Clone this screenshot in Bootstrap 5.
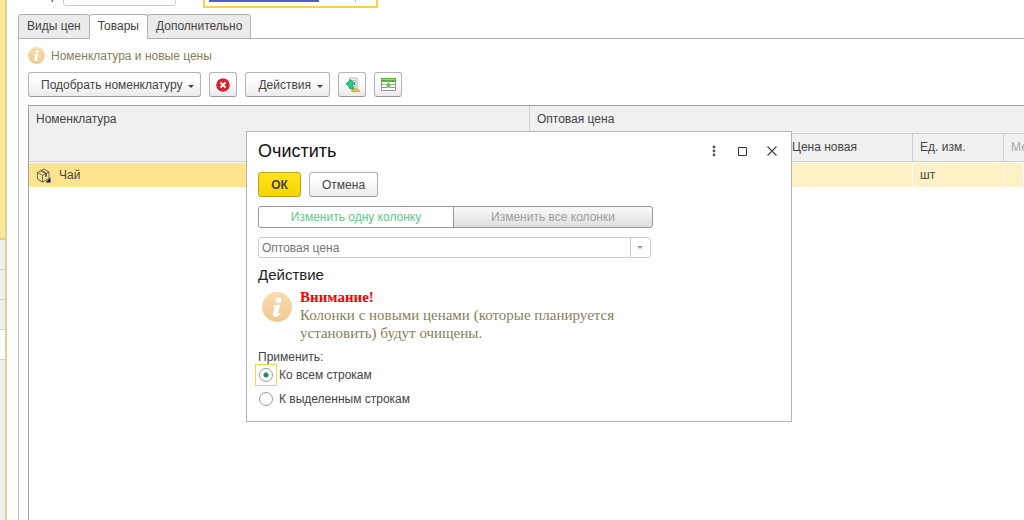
<!DOCTYPE html>
<html lang="ru">
<head>
<meta charset="utf-8">
<meta name="viewport" content="width=device-width, initial-scale=1">
<title>Установка цен номенклатуры</title>
<link href="https://cdn.jsdelivr.net/npm/bootstrap@5.3.0/dist/css/bootstrap.min.css" rel="stylesheet">
<style>
body { font-family: "Liberation Sans", Arial, sans-serif; font-size: 12px; line-height: 16px; color: #444; background: #fff; }
svg { display: block; flex: none; }

/* section strip on the left */
.strip { width: 7px; flex: none; background: #f0f0f0; border-right: 2px solid #d9d29a; }
.strip-head { height: 240px; background: #fbe995; border-bottom: 2px solid #d9d29a; }
.strip-item { height: 30px; border-bottom: 1px solid #d0d0d0; }
.strip-item.current { background: #fff; }

/* form header, scrolled up */
.work { padding-left: 11px; min-width: 0; }
.form-head { height: 8px; overflow: hidden; }
.form-head label { width: 45px; margin-bottom: 5px; font-size: 13px; }
.num-field { width: 113px; height: 24px; margin-bottom: 2px; border: 1px solid #ccc; border-radius: 3px; }
.price-field { width: 175px; height: 28px; margin-left: 27px; border: 2px solid #f9d03f; padding: 0 20px 4px 4px; }
.price-field select { width: 100%; height: 100%; padding: 0; border: 0; border-right: 1px solid #bbb; appearance: none; outline: 0;
  background: linear-gradient(#4a63c4, #4a63c4) 0 0 / 110px 20px no-repeat; color: #fff; }

/* tabs */
.form-tabs { margin-top: 6px; border-bottom: 1px solid #b0b0b0; }
.form-tabs .nav-link { height: 25px; padding: 3px 8px 4px; margin: 0 -1px -1px 0; font-size: 12px; line-height: 16px; color: #444; background: #ebebeb;
  border: 1px solid #b0b0b0; border-radius: 3px 3px 0 0; }
.form-tabs .nav-link.active { color: #444; background: #fff; border-color: #b0b0b0 #b0b0b0 #fff; }
.sheet { border-left: 1px solid #bdbdbd; padding: 8px 0 0 9px; }
.hint { color: #86805a; gap: 6px; }

/* buttons */
.btn-form { height: 25px; padding: 0 12px; font-size: 12px; line-height: 16px; color: #444; border: 1px solid #b4b4b4; border-bottom-color: #999;
  border-radius: 3px; background: linear-gradient(#fff 30%, #ebebeb); }
.btn-form:hover { color: #222; border-color: #999; }
.btn-form.dropdown-toggle::after { margin: 0 0 0 6px; border-width: 3px 3px 0; vertical-align: 1px; }
.btn-drop { padding-right: 6px; }
.btn-pic { width: 28px; padding: 0; display: flex; align-items: center; justify-content: center; }
.btn-ok { width: 43px; padding: 0; font-weight: 700; border-color: #b9a21c; background: linear-gradient(#ffe31c, #f5d500); }

/* goods table */
.goods { margin-top: 8px; border: 1px solid #a0a0a0; border-width: 1px 0 0 1px; overflow: hidden; }
.goods table { width: 100%; table-layout: fixed; border-collapse: separate; border-spacing: 0; white-space: nowrap; }
.goods th { font-weight: 400; background: #f0f0f0; height: 28px; padding: 5px 7px 6px; vertical-align: top; border-bottom: 1px solid #cfcfcf; border-right: 1px solid #cfcfcf; }
.goods th:last-child { border-right: 0; }
.goods td { height: 26px; padding: 0 7px; background: #fff1c5; border: 1px solid #fff; border-width: 1px 1px 1px 0; }
.goods td.picked { background: #ffe48f; }
.goods .dim { color: #a8a8a8; }

/* clear dialog */
.clear-box { position: absolute; left: 246px; top: 131px; width: 546px; background: #fff; border: 1px solid #b4b4b4; padding: 9px 11px 10px; }
.clear-box h1 { font-size: 18px; line-height: 20px; color: #111; margin: 0; }
.clear-box h2 { font-size: 15px; line-height: 18px; color: #222; margin: 8px 0 4px; }
.win-bar { margin-right: -6px; }
.win-btn { width: 29px; height: 20px; padding: 0; border: 0; background: none; display: flex; align-items: center; justify-content: center; }
.main-cmd { margin-top: 11px; }
.mode { width: 395px; margin-top: 9px; }
.mode .btn { height: 22px; padding: 0; font-size: 12px; line-height: 16px; border: 1px solid #999; border-radius: 3px; }
.mode .btn.active { flex: 0 0 196px; color: #5ec98c; background: #fff; border-color: #999; }
.mode .btn:disabled { color: #a0a0a0; background: linear-gradient(#fafafa, #dedede); border-color: #999; opacity: 1; }
.column-pick { width: 393px; height: 21px; margin-top: 9px; padding: 0 24px 0 3px; appearance: none; color: #777; opacity: 1; display: block;
  border: 1px solid #ccc; border-radius: 3px; background:
  linear-gradient(#ccc, #ccc) right 19px top 0 / 1px 100% no-repeat,
  url("data:image/svg+xml,%3Csvg xmlns='http://www.w3.org/2000/svg' width='6' height='3'%3E%3Cpath d='M0 0h6L3 3z' fill='%23999'/%3E%3C/svg%3E") right 7px top 8px no-repeat #fff; }
.warn { font-family: "Liberation Serif", "Times New Roman", serif; font-size: 15px; line-height: 18px; color: #86805a; padding-left: 4px; }
.warn strong { color: #f00; }
.warn svg { margin-top: 4px; }
.apply { margin-top: 9px; }
.apply legend { font-size: 12px; line-height: 12px; margin: 0; float: none; }
.pick { height: 24px; }
.pick span { width: 22px; height: 22px; margin: 0 2px 0 -3px; border: 1px solid transparent; display: flex; align-items: center; justify-content: center; }
.pick.current span { border-color: #f9d548; }
.pick input { appearance: none; width: 14px; height: 14px; margin: 0; border: 1px solid #999; border-radius: 50%; background: #fff; }
.pick input:checked { background: radial-gradient(circle, #14954c 2px, #fff 3px); }
</style>
</head>
<body>
<svg width="0" height="0" class="position-absolute" aria-hidden="true">
  <defs>
    <linearGradient id="amber" x1="0" y1="0" x2="0" y2="1"><stop offset="0" stop-color="#fbdcae"/><stop offset="1" stop-color="#efc993"/></linearGradient>
    <symbol id="info" viewBox="0 0 30 30">
      <circle cx="15" cy="15" r="15" fill="url(#amber)"/>
      <circle cx="16.500" cy="8.300" r="2.900" fill="#fff"/>
      <path d="M11 13.200 18.400 12.400 16 21.200Q15.800 22.600 18.200 21L18.800 22Q15.500 25 12.800 24.600 10.400 24.200 11 21.600L12.500 15.500Q12.600 14.400 10.800 14.300Z" fill="#fff"/>
    </symbol>
  </defs>
</svg>
<div class="d-flex min-vh-100 overflow-hidden position-relative">
  <aside class="strip">
    <div class="strip-head"></div>
    <div class="strip-item"></div>
    <div class="strip-item"></div>
    <div class="strip-item"></div>
    <div class="strip-item current"></div>
  </aside>

  <main class="work d-flex flex-column flex-fill">
    <div class="form-head d-flex align-items-end">
      <label for="num">Номер:</label>
      <input id="num" class="num-field" type="text">
      <div class="price-field"><select aria-label="Вид цены"><option></option></select></div>
    </div>

    <nav class="nav form-tabs">
      <a class="nav-link" href="#types">Виды цен</a>
      <a class="nav-link active" href="#goods">Товары</a>
      <a class="nav-link" href="#extra">Дополнительно</a>
    </nav>

    <section class="sheet d-flex flex-column flex-fill" id="goods">
      <div class="hint d-flex align-items-center">
        <svg width="17" height="17"><use href="#info"/></svg>
        <span>Номенклатура и новые цены</span>
      </div>

      <div class="d-flex gap-2 mt-2">
        <button type="button" class="btn btn-form btn-drop dropdown-toggle">Подобрать номенклатуру</button>
        <button type="button" class="btn btn-form btn-pic" aria-label="Очистить">
          <svg width="14" height="14" viewBox="0 0 14 14"><circle cx="7" cy="7" r="6.800" fill="#d9232e"/><path d="m4.500 4.500 5 5m0-5-5 5" stroke="#fff" stroke-width="1.800"/></svg>
        </button>
        <button type="button" class="btn btn-form btn-drop dropdown-toggle">Действия</button>
        <button type="button" class="btn btn-form btn-pic" aria-label="Загрузить цены">
          <svg width="15" height="16" viewBox="0 0 15 16"><path d="M4.500 1h7.500v11H4.500z" fill="#f3f8fb" stroke="#a5bac6"/><path d="M7 3.500h4m-3 2h3m-2 2h2m-2 2h2" stroke="#a9bfca"/><path d="M5.500 2.500 .800 7.200H3q0 4.500 5.500 5V9.500Q7 9 7.300 7.200h2.900z" fill="#27d17c" stroke="#129a58" stroke-width=".800"/><path d="M6.500 14.500q0-2.500 2.500-2.200 1.500-2.200 3 0 2.500 0 2.500 2.200z" fill="#f1c644" stroke="#c8982a" stroke-width=".700"/></svg>
        </button>
        <button type="button" class="btn btn-form btn-pic" aria-label="Заполнить таблицу">
          <svg width="15" height="14" viewBox="0 0 15 14"><path d="M.500 .500h14v12H.500z" fill="#fff" stroke="#8d9799"/><path d="M0 0h15v4H0z" fill="#5fae3f"/><path d="M1 1.500h13" stroke="#9ad67d"/><path d="M1 6.500h13M1 9.500h13" stroke="#8d9799"/><path d="M6.500 4h2v2h2.900L7.500 10 3.600 6h2.900z" fill="#5cb637" stroke="#fff" stroke-width=".500"/></svg>
        </button>
      </div>

      <div class="goods flex-fill">
        <table>
          <colgroup><col style="width:501px"><col style="width:255px"><col style="width:128px"><col style="width:91px"><col></colgroup>
          <thead>
            <tr><th rowspan="2">Номенклатура</th><th colspan="4">Оптовая цена</th></tr>
            <tr><th>Цена</th><th>Цена новая</th><th>Ед. изм.</th><th class="dim">Метод</th></tr>
          </thead>
          <tbody>
            <tr>
              <td class="picked"><div class="d-flex align-items-center gap-2">
                <svg width="15" height="15" viewBox="0 0 15 15"><path d="M1.500 4.500 8 1l5 3v6.500L6.500 14l-5-3zM1.500 4.500l5 2.800L13 4M6.500 7.300V14M4.500 2.800l5 3v3l1-.500V5.200l-5-3" fill="none" stroke="#5b574b" stroke-width=".900" stroke-linejoin="round"/><path d="M14.500 9.500v5h-5z" fill="#10106e"/></svg>
                <span>Чай</span></div></td>
              <td></td><td></td><td>шт</td><td></td>
            </tr>
          </tbody>
        </table>
      </div>
    </section>
  </main>

  <div class="clear-box" role="dialog" aria-labelledby="clear-title">
    <div class="win-bar d-flex align-items-center">
      <h1 id="clear-title" class="me-auto">Очистить</h1>
      <button type="button" class="win-btn" aria-label="Ещё"><svg width="4" height="12" viewBox="0 0 4 12" fill="#555"><circle cx="2" cy="2" r="1.400"/><circle cx="2" cy="6" r="1.400"/><circle cx="2" cy="10" r="1.400"/></svg></button>
      <button type="button" class="win-btn" aria-label="Развернуть"><svg width="9" height="9" viewBox="0 0 9 9"><path d="M.500 .500h8v8h-8z" fill="none" stroke="#333"/></svg></button>
      <button type="button" class="win-btn" aria-label="Закрыть"><svg width="10" height="10" viewBox="0 0 10 10"><path d="m.500 .500 9 9m0-9-9 9" stroke="#444" stroke-width="1.200"/></svg></button>
    </div>
    <div class="main-cmd d-flex gap-2">
      <button type="button" class="btn btn-form btn-ok">ОК</button>
      <button type="button" class="btn btn-form">Отмена</button>
    </div>
    <div class="btn-group d-flex mode">
      <button type="button" class="btn active">Изменить одну колонку</button>
      <button type="button" class="btn" disabled>Изменить все колонки</button>
    </div>
    <select class="column-pick" aria-label="Колонка" disabled><option>Оптовая цена</option></select>
    <h2>Действие</h2>
    <div class="warn d-flex gap-2">
      <svg width="30" height="30"><use href="#info"/></svg>
      <div><strong>Внимание!</strong><br>Колонки с новыми ценами (которые планируется<br>установить) будут очищены.</div>
    </div>
    <fieldset class="apply">
      <legend>Применить:</legend>
      <label class="pick current d-flex align-items-center"><span><input type="radio" name="rows" checked></span>Ко всем строкам</label>
      <label class="pick d-flex align-items-center"><span><input type="radio" name="rows"></span>К выделенным строкам</label>
    </fieldset>
  </div>
</div>
<script src="https://cdn.jsdelivr.net/npm/bootstrap@5.3.0/dist/js/bootstrap.bundle.min.js"></script>
</body>
</html>
